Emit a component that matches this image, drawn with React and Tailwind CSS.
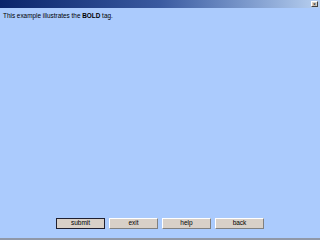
export default function App() {
  const buttons = ['submit', 'exit', 'help', 'back'];
  return (
    <div className="w-[320px] h-[240px] bg-[#abcbfd] flex flex-col font-['Liberation_Sans',Arial,sans-serif] overflow-hidden">
      {/* title bar */}
      <div className="h-[8px] flex items-start justify-end bg-gradient-to-r from-[#0a246a] via-[#3a5aa0] to-[#b8d0f0]">
        <div className="mt-[1px] mr-[2px] w-[7px] h-[6px] bg-[#d4d0c8] border-t border-l border-white border-r border-b border-r-[#404040] border-b-[#404040] flex items-center justify-center text-[5px] leading-none text-black">
          ×
        </div>
      </div>
      <div className="px-[3px] pt-[4px] text-[6.4px] leading-[8px] text-black">
        This example illustrates the <b>BOLD</b> tag.
      </div>
      <div className="flex-1" />
      <div className="flex gap-[4px] pl-[56px] mb-[9px]">
        {buttons.map((b, i) => (
          <div
            key={b}
            className={
              'w-[49px] h-[11px] bg-[#d8d0c8] text-[6.5px] leading-none text-black flex items-center justify-center border ' +
              (i === 0
                ? 'border-[#202030]'
                : 'border-t-white border-l-white border-r-[#808080] border-b-[#808080]')
            }
          >
            {b}
          </div>
        ))}
      </div>
      <div className="h-[2px] bg-[#9098a8]" />
    </div>
  );
}
